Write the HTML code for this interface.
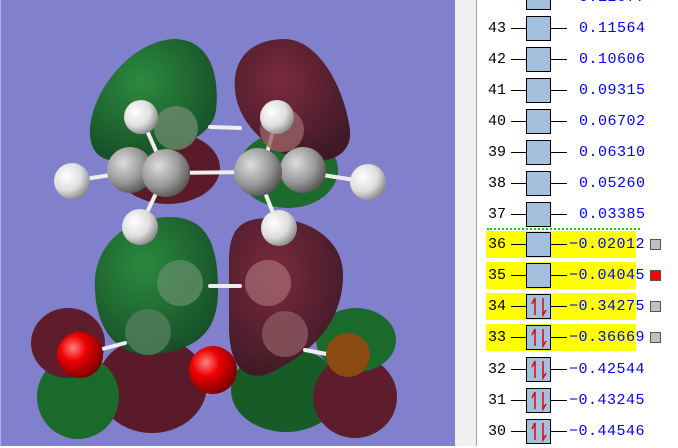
<!DOCTYPE html>
<html><head><meta charset="utf-8"><style>
body{margin:0;width:678px;height:446px;overflow:hidden;background:#fff;position:relative;font-family:"Liberation Mono",monospace}
#mol{position:absolute;left:0;top:0}
.strip{position:absolute;left:455px;top:0;width:21px;height:446px;background:#f0f0f0}
.vline{position:absolute;left:476px;top:0;width:1px;height:446px;background:#a0a0a0}
.row{position:absolute;left:486px;width:150px;height:27px}
.hl{background:#ffff00}
.num{position:absolute;left:2px;top:5px;font-size:15px;color:#000}
.ln{position:absolute;top:13px;height:1px;background:#000}
.box{position:absolute;left:40px;top:1px;width:23px;height:23px;border:1px solid #000;background:#a3c1de}
.val{position:absolute;top:5px;font-size:15px;color:#0000ff;letter-spacing:0.5px}
.sq{position:absolute;left:650px;width:9px;height:9px;border:1px solid #555;background:#c0c0c0}
.dots{position:absolute;left:487px;top:228px;width:153px;height:0;border-top:2px dotted #00dd00}
</style></head><body>
<svg id="mol" width="456" height="446" viewBox="0 0 456 446">
<defs>
<radialGradient id="gw" cx="0.35" cy="0.35" r="0.7"><stop offset="0" stop-color="#fff"/><stop offset="0.6" stop-color="#ddd"/><stop offset="1" stop-color="#888"/></radialGradient>
<radialGradient id="gc" cx="0.35" cy="0.35" r="0.7"><stop offset="0" stop-color="#ddd"/><stop offset="0.6" stop-color="#999"/><stop offset="1" stop-color="#555"/></radialGradient>
<radialGradient id="gr" cx="0.35" cy="0.35" r="0.7"><stop offset="0" stop-color="#ff8080"/><stop offset="0.4" stop-color="#ee0000"/><stop offset="1" stop-color="#770000"/></radialGradient>
<radialGradient id="lg" cx="0.4" cy="0.35" r="0.7"><stop offset="0" stop-color="#2a8a3a"/><stop offset="1" stop-color="#134d22"/></radialGradient>
<radialGradient id="lr" cx="0.4" cy="0.35" r="0.7"><stop offset="0" stop-color="#7a2838"/><stop offset="1" stop-color="#3e1624"/></radialGradient>
</defs>
<rect x="0" y="0" width="456" height="446" fill="#8080cc"/>
<rect x="0" y="0" width="1" height="446" fill="#b0b0e0"/>
<!-- back lobes -->
<ellipse cx="168" cy="168" rx="52" ry="36" fill="#5a1a2a"/>
<ellipse cx="288" cy="170" rx="50" ry="38" fill="#1c6a2c"/>
<!-- top lobes -->
<path d="M90,135 C88,95 130,40 175,39 C210,40 220,75 216,110 C212,140 170,150 140,158 C110,165 92,160 90,135Z" fill="url(#lg)" opacity="0.97"/>
<path d="M235,90 C232,55 255,39 285,39 C320,40 345,90 350,130 C352,155 330,165 300,160 C265,150 237,120 235,90Z" fill="url(#lr)" opacity="0.97"/>
<!-- bottom lobes -->
<ellipse cx="152" cy="385" rx="55" ry="48" fill="#5a1a2a"/>
<ellipse cx="286" cy="390" rx="55" ry="42" fill="#175c27"/>
<ellipse cx="78" cy="397" rx="41" ry="42" fill="#1a6a2b"/>
<ellipse cx="68" cy="343" rx="37" ry="35" fill="#5e1c2c"/>
<ellipse cx="355" cy="397" rx="42" ry="41" fill="#5e1c2c"/>
<ellipse cx="356" cy="340" rx="40" ry="32" fill="#1a6a2b"/>
<path d="M95,290 C92,250 120,218 170,217 C210,217 218,250 218,290 C218,330 200,350 150,355 C110,355 96,320 95,290Z" fill="url(#lg)" opacity="0.97"/>
<path d="M229,260 C229,225 245,218 270,218 C310,218 343,240 343,275 C343,330 300,360 265,375 C240,380 230,360 229,330Z" fill="url(#lr)" opacity="0.97"/>
<!-- bonds -->
<g stroke="#eee" stroke-width="4" stroke-linecap="round">
<line x1="166" y1="173" x2="258" y2="172"/>
<line x1="72" y1="181" x2="130" y2="172"/>
<line x1="303" y1="172" x2="368" y2="182"/>
<line x1="141" y1="117" x2="160" y2="160"/>
<line x1="277" y1="117" x2="265" y2="160"/>
<line x1="140" y1="227" x2="160" y2="185"/>
<line x1="279" y1="228" x2="262" y2="185"/>
<line x1="210" y1="127" x2="240" y2="128"/>
<line x1="210" y1="286" x2="240" y2="286"/>
<line x1="80" y1="355" x2="125" y2="343"/>
<line x1="305" y1="350" x2="348" y2="358"/>
</g>
<!-- atoms -->
<circle cx="176" cy="128" r="22" fill="#6a8a6c" opacity="0.8"/>
<circle cx="282" cy="130" r="22" fill="#9a6066" opacity="0.8"/>
<circle cx="130" cy="170" r="23" fill="url(#gc)"/>
<circle cx="303" cy="170" r="23" fill="url(#gc)"/>
<circle cx="166" cy="173" r="24" fill="url(#gc)"/>
<circle cx="258" cy="172" r="24" fill="url(#gc)"/>
<circle cx="141" cy="117" r="17" fill="url(#gw)"/>
<circle cx="277" cy="117" r="17" fill="url(#gw)"/>
<circle cx="72" cy="181" r="18" fill="url(#gw)"/>
<circle cx="368" cy="182" r="18" fill="url(#gw)"/>
<circle cx="140" cy="227" r="18" fill="url(#gw)"/>
<circle cx="279" cy="228" r="18" fill="url(#gw)"/>
<circle cx="180" cy="283" r="23" fill="#5c8a64" opacity="0.85"/>
<circle cx="268" cy="283" r="23" fill="#9c6068" opacity="0.85"/>
<circle cx="148" cy="332" r="23" fill="#4e7a56" opacity="0.9"/>
<circle cx="285" cy="334" r="23" fill="#84525a" opacity="0.9"/>
<circle cx="80" cy="355" r="23" fill="url(#gr)"/>
<circle cx="348" cy="355" r="22" fill="#8a4a12"/>
<circle cx="213" cy="370" r="24" fill="url(#gr)"/>
</svg>
<div class="strip"></div><div class="vline"></div>

<div class="row" style="top:-16px"><div class="ln" style="left:25px;width:15px"></div><div class="box"></div><div class="ln" style="left:65px;width:16px"></div><div class="val" style="left:93px">0.12077</div></div>
<div class="row" style="top:15px"><div class="num">43</div><div class="ln" style="left:25px;width:15px"></div><div class="box"></div><div class="ln" style="left:65px;width:16px"></div><div class="val" style="left:93px">0.11564</div></div>
<div class="row" style="top:46px"><div class="num">42</div><div class="ln" style="left:25px;width:15px"></div><div class="box"></div><div class="ln" style="left:65px;width:16px"></div><div class="val" style="left:93px">0.10606</div></div>
<div class="row" style="top:77px"><div class="num">41</div><div class="ln" style="left:25px;width:15px"></div><div class="box"></div><div class="ln" style="left:65px;width:16px"></div><div class="val" style="left:93px">0.09315</div></div>
<div class="row" style="top:108px"><div class="num">40</div><div class="ln" style="left:25px;width:15px"></div><div class="box"></div><div class="ln" style="left:65px;width:16px"></div><div class="val" style="left:93px">0.06702</div></div>
<div class="row" style="top:139px"><div class="num">39</div><div class="ln" style="left:25px;width:15px"></div><div class="box"></div><div class="ln" style="left:65px;width:16px"></div><div class="val" style="left:93px">0.06310</div></div>
<div class="row" style="top:170px"><div class="num">38</div><div class="ln" style="left:25px;width:15px"></div><div class="box"></div><div class="ln" style="left:65px;width:16px"></div><div class="val" style="left:93px">0.05260</div></div>
<div class="row" style="top:201px"><div class="num">37</div><div class="ln" style="left:25px;width:15px"></div><div class="box"></div><div class="ln" style="left:65px;width:16px"></div><div class="val" style="left:93px">0.03385</div></div>
<div class="dots"></div>

<div class="row hl" style="top:231px"><div class="num">36</div><div class="ln" style="left:25px;width:15px"></div><div class="box"></div><div class="ln" style="left:65px;width:16px"></div><div class="val" style="left:83px">−0.02012</div></div>
<div class="row hl" style="top:262px"><div class="num">35</div><div class="ln" style="left:25px;width:15px"></div><div class="box"></div><div class="ln" style="left:65px;width:16px"></div><div class="val" style="left:83px">−0.04045</div></div>
<div class="row hl" style="top:293px"><div class="num">34</div><div class="ln" style="left:25px;width:15px"></div><div class="box"><svg width="23" height="23"><path d="M8,20 V3 L5,9 M16,3 V20 L19,15" stroke="#e00" stroke-width="1.5" fill="none"/></svg></div><div class="ln" style="left:65px;width:16px"></div><div class="val" style="left:83px">−0.34275</div></div>
<div class="row hl" style="top:324px"><div class="num">33</div><div class="ln" style="left:25px;width:15px"></div><div class="box"><svg width="23" height="23"><path d="M8,20 V3 L5,9 M16,3 V20 L19,15" stroke="#e00" stroke-width="1.5" fill="none"/></svg></div><div class="ln" style="left:65px;width:16px"></div><div class="val" style="left:83px">−0.36669</div></div>
<div class="row" style="top:356px"><div class="num">32</div><div class="ln" style="left:25px;width:15px"></div><div class="box"><svg width="23" height="23"><path d="M8,20 V3 L5,9 M16,3 V20 L19,15" stroke="#e00" stroke-width="1.5" fill="none"/></svg></div><div class="ln" style="left:65px;width:16px"></div><div class="val" style="left:83px">−0.42544</div></div>
<div class="row" style="top:387px"><div class="num">31</div><div class="ln" style="left:25px;width:15px"></div><div class="box"><svg width="23" height="23"><path d="M8,20 V3 L5,9 M16,3 V20 L19,15" stroke="#e00" stroke-width="1.5" fill="none"/></svg></div><div class="ln" style="left:65px;width:16px"></div><div class="val" style="left:83px">−0.43245</div></div>
<div class="row" style="top:418px"><div class="num">30</div><div class="ln" style="left:25px;width:15px"></div><div class="box"><svg width="23" height="23"><path d="M8,20 V3 L5,9 M16,3 V20 L19,15" stroke="#e00" stroke-width="1.5" fill="none"/></svg></div><div class="ln" style="left:65px;width:16px"></div><div class="val" style="left:83px">−0.44546</div></div>

<div class="sq" style="top:239px"></div>
<div class="sq" style="top:270px;background:#ff0000"></div>
<div class="sq" style="top:301px"></div>
<div class="sq" style="top:332px"></div>
</body></html>
